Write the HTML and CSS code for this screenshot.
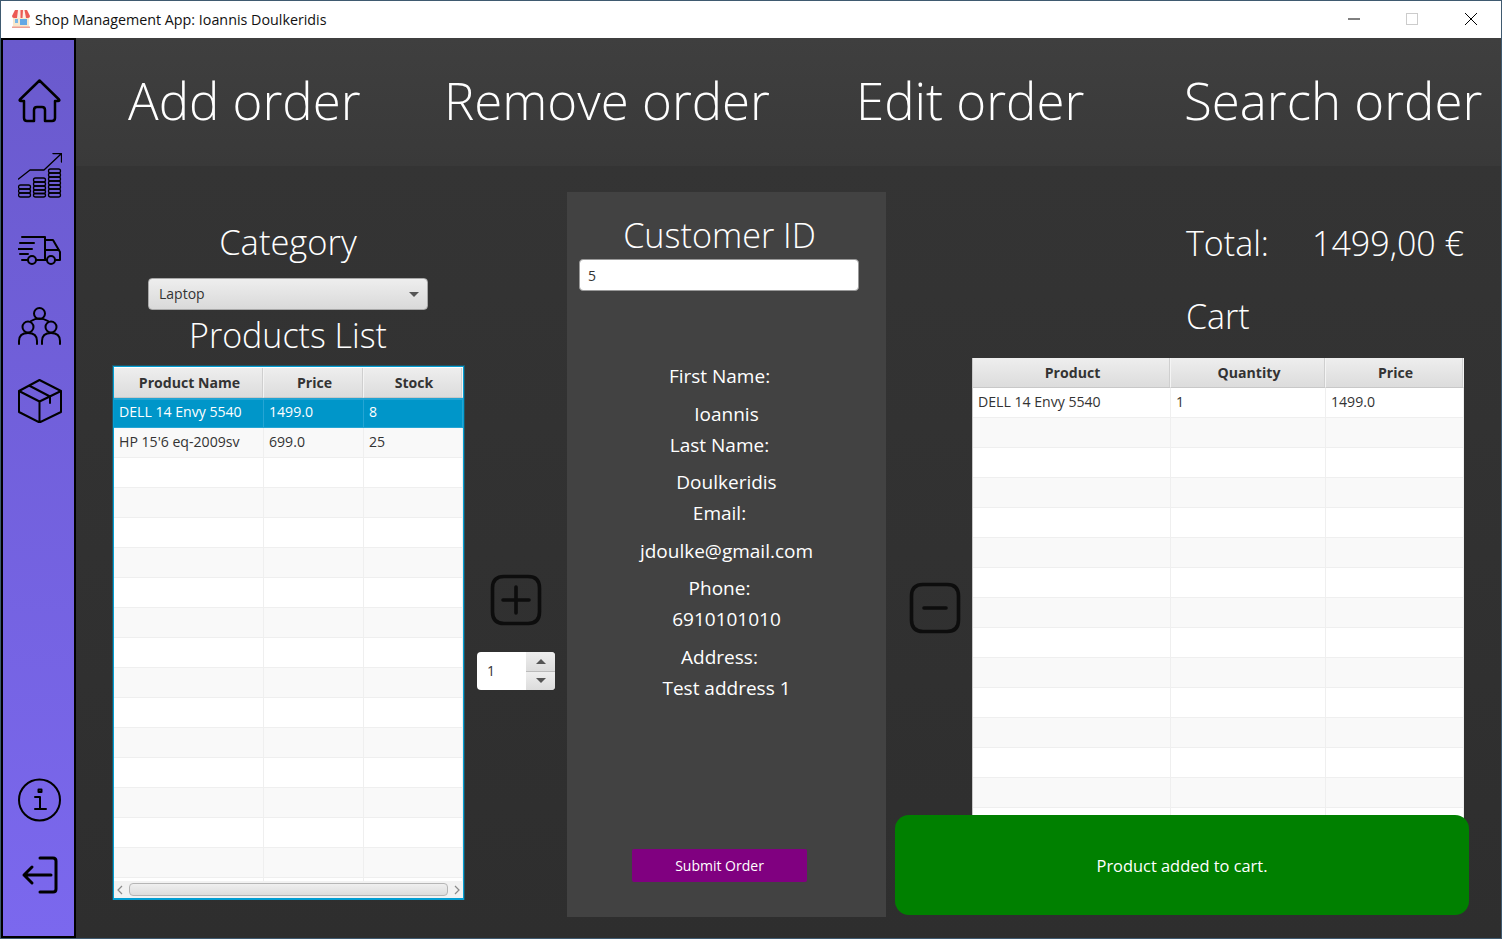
FILE: index.html
```html
<!DOCTYPE html>
<html lang="en">
<head>
    <meta charset="UTF-8">
    <meta name="viewport" content="width=device-width, initial-scale=1.0">
    <title>Shop Management App: Ioannis Doulkeridis</title>
    <link rel="stylesheet" href="styles.css">
</head>
<body>
    <div class="window">
        <div class="titlebar">
            <svg class="app-icon" width="20" height="20" viewBox="0 0 20 20">
                <rect x="2" y="8" width="16" height="10" fill="#f8e8cc"/>
                <rect x="9" y="10" width="7" height="6" fill="#62a8e5"/>
                <rect x="4" y="10" width="3" height="4" fill="#7ab8e8"/>
                <path d="M4 1H16L19 7Q19 9 17 9H3Q1 9 1 7Z" fill="#ec5a55"/>
                <path d="M7 1H9.500V9H6ZM12 1H13.500L15 9H11.500Z" fill="#fdeee6"/>
                <rect x="1" y="17.500" width="18" height="1.500" fill="#eda094"/>
            </svg>
            <span class="title-text">Shop Management App: Ioannis Doulkeridis</span>
            <div class="win-controls">
                <svg width="14" height="14" viewBox="0 0 14 14"><path d="M1 7H13" stroke="#000" stroke-width="1"/></svg>
                <svg width="14" height="14" viewBox="0 0 14 14"><rect x="1.500" y="1.500" width="11" height="11" fill="none" stroke="#ccc"/></svg>
                <svg width="14" height="14" viewBox="0 0 14 14"><path d="M1 1L13 13M13 1L1 13" stroke="#000" stroke-width="1"/></svg>
            </div>
        </div>

        <div class="app">
            <nav class="sidebar">
                <div class="side-group">
                    <div class="side-item">
                        <svg width="44" height="44" viewBox="0 0 44 44" class="ico-thick"><path d="M21.500 1.500L2 20.500Q1 22 3 22H6V39Q6 42 9 42H16V31Q16 28 19 28H24Q27 28 27 31V42H34Q37 42 37 39V22H40Q42 22 41 20.500Z"/></svg>
                    </div>
                    <div class="side-item">
                        <svg width="44" height="45" viewBox="0 0 44 45" class="ico-thin">
                            <path d="M0.500 26L12 17H26L43 1M35 0.500H43.500V9"/>
                            <rect x="0.500" y="32" width="12" height="4" rx="2"/>
                            <rect x="0.500" y="36" width="12" height="4" rx="2"/>
                            <rect x="0.500" y="40" width="12" height="4" rx="2"/>
                            <rect x="15.500" y="25" width="12" height="4" rx="2"/>
                            <rect x="15.500" y="29" width="12" height="4" rx="2"/>
                            <rect x="15.500" y="33" width="12" height="4" rx="2"/>
                            <rect x="15.500" y="37" width="12" height="3.500" rx="2"/>
                            <rect x="15.500" y="40.500" width="12" height="3.500" rx="2"/>
                            <rect x="30.500" y="16" width="12" height="4" rx="2"/>
                            <rect x="30.500" y="20" width="12" height="4" rx="2"/>
                            <rect x="30.500" y="24" width="12" height="4" rx="2"/>
                            <rect x="30.500" y="28" width="12" height="4" rx="2"/>
                            <rect x="30.500" y="32" width="12" height="4" rx="2"/>
                            <rect x="30.500" y="36" width="12" height="4" rx="2"/>
                            <rect x="30.500" y="40" width="12" height="4" rx="2"/>
                        </svg>
                    </div>
                    <div class="side-item">
                        <svg width="44" height="32" viewBox="0 0 44 32" class="ico-mid">
                            <path d="M4 2H27V25M27 5H35L42 17V25H38M4 25H10M18 25H29M27 5V15H41"/>
                            <circle cx="14" cy="25" r="4"/>
                            <circle cx="33" cy="25" r="4"/>
                            <path d="M2 8H16M0 14H14M2 19H10"/>
                        </svg>
                    </div>
                    <div class="side-item">
                        <svg width="44" height="38" viewBox="0 0 44 38" class="ico-mid">
                            <circle cx="21.500" cy="6.500" r="5.500"/>
                            <circle cx="10" cy="20" r="5.500"/>
                            <circle cx="33" cy="20" r="5.500"/>
                            <path d="M1 37V34Q1 26 10 26Q19 26 19 34V37M24 37V34Q24 26 33 26Q42 26 42 34V37M13 14Q21 9 30 14"/>
                        </svg>
                    </div>
                    <div class="side-item">
                        <svg width="44" height="44" viewBox="0 0 44 44" class="ico-mid">
                            <path d="M21.500 1L43 12V33L21.500 43.500L1 33V12ZM1 12L21.500 22.500L43 12M21.500 22.500V43.500M11 6.500L32 17.500V24"/>
                        </svg>
                    </div>
                </div>
                <div class="side-group">
                    <div class="side-item">
                        <svg width="44" height="44" viewBox="0 0 44 44" class="ico-mid">
                            <circle cx="21.500" cy="22" r="20.500"/>
                            <path d="M17 19H22V31M17 31H28"/>
                            <path d="M20.500 11.500H23.500V14H20.500Z"/>
                        </svg>
                    </div>
                    <div class="side-item">
                        <svg width="38" height="38" viewBox="0 0 38 38" class="ico-heavy">
                            <path d="M19 2H32Q35 2 35 5V33Q35 36 32 36H19M30 19H3M11 11L3 19L11 27"/>
                        </svg>
                    </div>
                </div>
            </nav>

            <div class="main">
                <header class="topnav">
                    <span>Add order</span>
                    <span>Remove order</span>
                    <span>Edit order</span>
                    <span>Search order</span>
                </header>

                <div class="content">
                    <section class="products">
                        <h2 class="category-title">Category</h2>
                        <div class="select"><span>Laptop</span><i class="caret"></i></div>
                        <h2 class="products-title">Products List</h2>
                        <div class="table-box focused">
                            <div class="table-clip">
                                <table class="grid">
                                    <colgroup><col class="c-name"><col class="c-price"><col></colgroup>
                                    <thead><tr><th>Product Name</th><th>Price</th><th>Stock</th></tr></thead>
                                    <tbody>
                                        <tr class="selected"><td>DELL 14 Envy 5540</td><td>1499.0</td><td>8</td></tr>
                                        <tr><td>HP 15'6 eq-2009sv</td><td>699.0</td><td>25</td></tr>
                                        <tr><td></td><td></td><td></td></tr>
                                        <tr><td></td><td></td><td></td></tr>
                                        <tr><td></td><td></td><td></td></tr>
                                        <tr><td></td><td></td><td></td></tr>
                                        <tr><td></td><td></td><td></td></tr>
                                        <tr><td></td><td></td><td></td></tr>
                                        <tr><td></td><td></td><td></td></tr>
                                        <tr><td></td><td></td><td></td></tr>
                                        <tr><td></td><td></td><td></td></tr>
                                        <tr><td></td><td></td><td></td></tr>
                                        <tr><td></td><td></td><td></td></tr>
                                        <tr><td></td><td></td><td></td></tr>
                                        <tr><td></td><td></td><td></td></tr>
                                        <tr><td></td><td></td><td></td></tr>
                                        <tr><td></td><td></td><td></td></tr>
                                    </tbody>
                                </table>
                            </div>
                            <div class="hscroll">
                                <svg width="8" height="10" viewBox="0 0 8 10"><path d="M6 1L2 5L6 9" fill="none" stroke="#8a8a8a" stroke-width="1.200"/></svg>
                                <div class="thumb"></div>
                                <svg width="8" height="10" viewBox="0 0 8 10"><path d="M2 1L6 5L2 9" fill="none" stroke="#8a8a8a" stroke-width="1.200"/></svg>
                            </div>
                        </div>
                    </section>

                    <div class="add-col">
                        <svg width="52" height="52" viewBox="0 0 52 52" class="ico-btn">
                            <path d="M14 2.500H38Q49.500 2.500 49.500 14V38Q49.500 49.500 38 49.500H14Q2.500 49.500 2.500 38V14Q2.500 2.500 14 2.500Z"/>
                            <path d="M13 26H39M26 13V39"/>
                        </svg>
                        <div class="spinner">
                            <span class="spinner-value">1</span>
                            <div class="spinner-btns">
                                <div class="spin-btn"><i class="arrow-up"></i></div>
                                <div class="spin-btn"><i class="arrow-down"></i></div>
                            </div>
                        </div>
                    </div>

                    <section class="customer">
                        <h2 class="customer-title">Customer ID</h2>
                        <div class="text-input">5</div>
                        <div class="details">
                            <div class="d-label">First Name:</div>
                            <div class="d-value">Ioannis</div>
                            <div class="d-label tight">Last Name:</div>
                            <div class="d-value">Doulkeridis</div>
                            <div class="d-label tight">Email:</div>
                            <div class="d-value">jdoulke@gmail.com</div>
                            <div class="d-label">Phone:</div>
                            <div class="d-value tight">6910101010</div>
                            <div class="d-label">Address:</div>
                            <div class="d-value tight">Test address 1</div>
                        </div>
                        <button class="submit" type="button">Submit Order</button>
                    </section>

                    <div class="remove-col">
                        <svg width="52" height="52" viewBox="0 0 52 52" class="ico-btn">
                            <path d="M14 2.500H38Q49.500 2.500 49.500 14V38Q49.500 49.500 38 49.500H14Q2.500 49.500 2.500 38V14Q2.500 2.500 14 2.500Z"/>
                            <path d="M15 26H37"/>
                        </svg>
                    </div>

                    <section class="cart">
                        <div class="total-row"><span>Total:</span><span>1499,00 €</span></div>
                        <h2 class="cart-title">Cart</h2>
                        <div class="table-box plain">
                            <table class="grid">
                                <colgroup><col class="c-product"><col class="c-qty"><col></colgroup>
                                <thead><tr><th>Product</th><th>Quantity</th><th>Price</th></tr></thead>
                                <tbody>
                                    <tr><td>DELL 14 Envy 5540</td><td>1</td><td>1499.0</td></tr>
                                    <tr><td></td><td></td><td></td></tr>
                                    <tr><td></td><td></td><td></td></tr>
                                    <tr><td></td><td></td><td></td></tr>
                                    <tr><td></td><td></td><td></td></tr>
                                    <tr><td></td><td></td><td></td></tr>
                                    <tr><td></td><td></td><td></td></tr>
                                    <tr><td></td><td></td><td></td></tr>
                                    <tr><td></td><td></td><td></td></tr>
                                    <tr><td></td><td></td><td></td></tr>
                                    <tr><td></td><td></td><td></td></tr>
                                    <tr><td></td><td></td><td></td></tr>
                                    <tr><td></td><td></td><td></td></tr>
                                    <tr><td></td><td></td><td></td></tr>
                                    <tr><td></td><td></td><td></td></tr>
                                </tbody>
                            </table>
                        </div>
                    </section>

                    <div class="toast">Product added to cart.</div>
                </div>
            </div>
        </div>
    </div>
</body>
</html>
```

FILE: styles.css
```css
* {
    box-sizing: border-box;
}
html, body {
    margin: 0;
    height: 100%;
    overflow: hidden;
}
body {
    font-family: "Open Sans", "Noto Sans", sans-serif;
    color: #fff;
}
h2 {
    margin: 0;
    font-weight: 300;
}
.window {
    width: 1502px;
    height: 939px;
    border: 1px solid #3f5a70;
    display: flex;
    flex-direction: column;
    background: #fff;
}

/* title bar */
.titlebar {
    height: 37px;
    flex: none;
    display: flex;
    align-items: center;
    padding-left: 10px;
    background: #fff;
    color: #111;
}
.app-icon {
    margin-right: 4px;
    margin-top: -2px;
}
.title-text {
    font-size: 14.3px;
    font-family: "Open Sans", sans-serif;
}
.win-controls {
    margin-left: auto;
    display: flex;
    gap: 44px;
    padding-right: 23px;
    margin-top: -1px;
}
.win-controls svg:last-child {
    margin-left: 1px;
}

/* left bar */
.app {
    flex: 1;
    display: flex;
    min-height: 0;
}
.sidebar {
    width: 75px;
    flex: none;
    border: 2px solid #000;
    background: linear-gradient(#6a5acd, #7b68ee);
    padding: 23px 0 24px;
    display: flex;
    flex-direction: column;
    justify-content: space-between;
}
.side-item {
    height: 75px;
    display: flex;
    align-items: center;
    justify-content: center;
    padding-left: 3px;
}
.sidebar svg {
    fill: none;
    stroke: #000;
    stroke-linejoin: round;
    stroke-linecap: round;
}
.ico-thick { stroke-width: 2.5; }
.ico-thin { stroke-width: 1.3; }
.ico-mid { stroke-width: 2; }
.ico-heavy { stroke-width: 3; }

/* main area */
.main {
    flex: 1;
    display: flex;
    flex-direction: column;
    min-width: 0;
    background: linear-gradient(#353535, #2e2e2e);
}
.topnav {
    height: 128px;
    flex: none;
    display: grid;
    grid-template-columns: 316px 412px 328px 1fr;
    align-items: center;
    padding: 0 0 5px 52px;
    background: linear-gradient(#3f3f3f, #393939);
    font-size: 51px;
    font-weight: 300;
    white-space: nowrap;
}
.content {
    flex: 1;
    position: relative;
    display: flex;
    min-height: 0;
    padding-left: 37px;
}

/* products */
.products {
    width: 350px;
    flex: none;
    display: flex;
    flex-direction: column;
    align-items: center;
}
.category-title {
    font-size: 34.5px;
    line-height: 44px;
    margin-top: 54px;
}
.select {
    width: 280px;
    height: 32px;
    margin-top: 14px;
    padding: 0 8px 2px 10px;
    display: flex;
    align-items: center;
    justify-content: space-between;
    border: 1px solid #a8a8a8;
    border-radius: 4px;
    background: linear-gradient(#eeeeee, #d9d9d9);
    color: #333;
    font-size: 14px;
}
.caret {
    border-left: 5px solid transparent;
    border-right: 5px solid transparent;
    border-top: 5px solid #555;
    margin-top: 2px;
}
.products-title {
    font-size: 34px;
    line-height: 44px;
    margin-top: 3px;
}
.table-box {
    background: #fff;
    color: #333;
    width: 100%;
    overflow: hidden;
}
.focused {
    width: 351px;
    height: 533px;
    margin: 9px 0 0 1px;
    border: 1px solid #039ed3;
    box-shadow: 0 1px 0 #039ed3, 0 0 0 1px rgba(3, 158, 211, 0.3);
    display: flex;
    flex-direction: column;
}
.table-clip {
    flex: 1;
    overflow: hidden;
    min-height: 0;
    padding-top: 1px;
}
.grid {
    width: 100%;
    table-layout: fixed;
    border-collapse: separate;
    border-spacing: 0;
    font-size: 14.1px;
}
.c-name { width: 150px; }
.c-price { width: 100px; }
.c-product { width: 198px; }
.c-qty { width: 155px; }
.grid th {
    height: 30px;
    padding: 0 0 0 2px;
    font-weight: 700;
    color: #333;
    background: linear-gradient(#eeeeee, #dcdcdc);
    border-right: 1px solid #f4f4f4;
    border-bottom: 1px solid #c8c8c8;
    box-shadow: inset -1px 0 0 #cfcfcf;
}
.grid td {
    height: 30px;
    padding: 0 5px 2px;
    white-space: nowrap;
    overflow: hidden;
    border-right: 1px solid #efefef;
    border-bottom: 1px solid #efefef;
}
.grid tbody tr:nth-child(even) td {
    background: #f9f9f9;
}
.grid tbody tr.selected td {
    background: #0096c9;
    color: #fff;
    border-right-color: #25a5d4;
    border-bottom-color: #25a5d4;
    box-shadow: inset 0 2px 0 #1fa3d3;
}
.hscroll {
    height: 17px;
    flex: none;
    display: flex;
    align-items: center;
    gap: 5px;
    padding: 0 2px;
    background: #f2f2f2;
}
.thumb {
    flex: 1;
    height: 13px;
    border: 1px solid #b5b5b5;
    border-radius: 4px;
    background: linear-gradient(#efefef, #dddddd);
}

/* add column */
.add-col {
    width: 104px;
    flex: none;
    display: flex;
    flex-direction: column;
    align-items: center;
    padding: 408px 0 0 2px;
}
.ico-btn {
    fill: none;
    stroke: #0d0d0d;
    stroke-width: 3.6;
    stroke-linecap: round;
}
.spinner {
    width: 78px;
    height: 38px;
    margin-top: 26px;
    display: flex;
    border-radius: 4px;
    overflow: hidden;
    background: #fff;
    color: #333;
    font-size: 14px;
}
.spinner-value {
    flex: 1;
    padding-left: 10px;
    line-height: 38px;
}
.spinner-btns {
    width: 29px;
    display: flex;
    flex-direction: column;
    gap: 1px;
    background: #bbb;
}
.spin-btn {
    flex: 1;
    display: flex;
    align-items: center;
    justify-content: center;
    background: linear-gradient(#eee, #dcdcdc);
}
.arrow-up {
    border-left: 5px solid transparent;
    border-right: 5px solid transparent;
    border-bottom: 5px solid #555;
}
.arrow-down {
    border-left: 5px solid transparent;
    border-right: 5px solid transparent;
    border-top: 5px solid #555;
}

/* customer panel */
.customer {
    width: 319px;
    flex: none;
    height: 725px;
    margin-top: 26px;
    padding: 21px 12px 0;
    display: flex;
    flex-direction: column;
    background: #424242;
}
.customer-title {
    font-size: 34.2px;
    line-height: 44px;
    text-align: center;
    padding-right: 14px;
}
.text-input {
    width: 280px;
    height: 32px;
    margin-top: 2px;
    padding: 0 8px;
    line-height: 31px;
    border: 1px solid #999;
    border-radius: 4px;
    background: #fff;
    color: #333;
    font-size: 14px;
}
.details {
    margin-top: 70px;
    font-size: 19px;
    font-weight: 400;
    line-height: 31px;
    text-align: center;
    padding-right: 14px;
}
.d-label {
    margin-top: 6.5px;
}
.d-label.tight {
    margin-top: 0;
}
.d-value {
    padding-left: 14px;
    margin-top: 6.5px;
}
.d-value.tight {
    margin-top: 0;
}
.details .d-label:first-child {
    margin-top: 0;
}
.submit {
    width: 175px;
    height: 33px;
    margin: auto 0 35px 53px;
    border: 0;
    border-radius: 2px;
    background: #800080;
    color: #fff;
    font-family: inherit;
    font-size: 14px;
}

/* cart */
.remove-col {
    width: 86px;
    flex: none;
    padding: 416px 0 0 23px;
}
.cart {
    width: 492px;
    flex: none;
}
.total-row {
    display: flex;
    justify-content: space-between;
    padding-left: 214px;
    margin-top: 55px;
    font-size: 34px;
    line-height: 44px;
    font-weight: 300;
}
.cart-title {
    padding-left: 214px;
    margin-top: 29px;
    font-size: 34px;
    line-height: 44px;
}
.plain {
    margin-top: 20px;
    height: 500px;
    border-left: 1px solid #c8c8c8;
}

/* popup over the cart */
.toast {
    position: absolute;
    left: 819px;
    top: 649px;
    width: 574px;
    height: 100px;
    display: flex;
    align-items: center;
    justify-content: center;
    border-radius: 14px;
    background: #008000;
    color: #fff;
    font-size: 16.4px;
    font-weight: 400;
}
```
